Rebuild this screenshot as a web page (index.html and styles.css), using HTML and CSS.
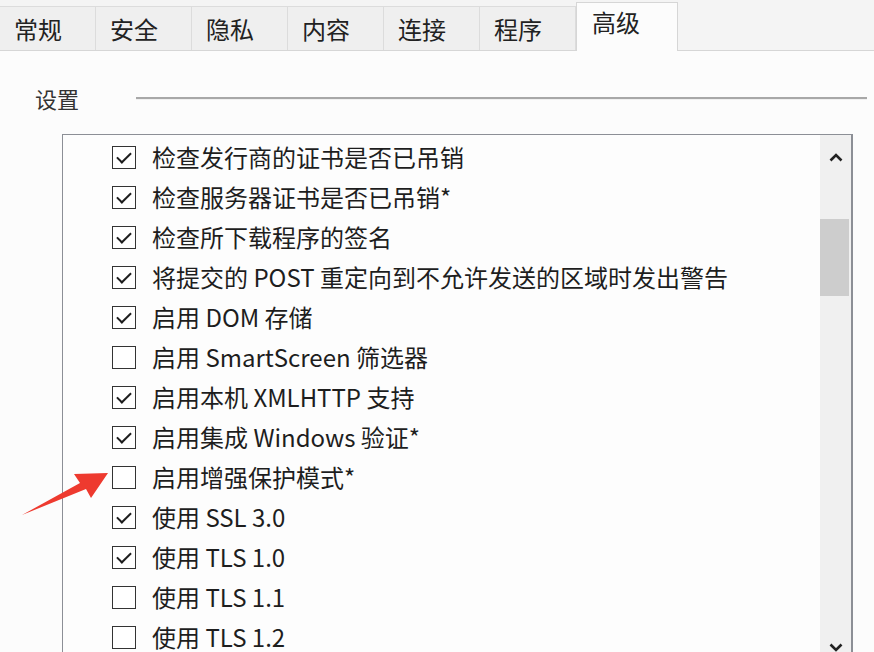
FILE: index.html
```html
<!DOCTYPE html>
<html lang="zh-CN">
<head>
  <meta charset="UTF-8">
  <meta name="viewport" content="width=device-width, initial-scale=1.0">
  <title>高级</title>
  <link rel="stylesheet" href="styles.css">
</head>
<body>
  <div class="dialog">
    <div class="tabs">
      <span class="tab">常规</span>
      <span class="tab">安全</span>
      <span class="tab">隐私</span>
      <span class="tab">内容</span>
      <span class="tab">连接</span>
      <span class="tab">程序</span>
      <span class="tab active">高级</span>
    </div>
    <div class="panel">
      <div class="group-title">
        <span class="group-label">设置</span>
        <span class="group-line"></span>
      </div>
      <div class="settings-box">
        <div class="settings-list">
          <div class="setting checked"><span class="checkbox"></span><span class="setting-text">检查发行商的证书是否已吊销</span></div>
          <div class="setting checked"><span class="checkbox"></span><span class="setting-text">检查服务器证书是否已吊销*</span></div>
          <div class="setting checked"><span class="checkbox"></span><span class="setting-text">检查所下载程序的签名</span></div>
          <div class="setting checked"><span class="checkbox"></span><span class="setting-text">将提交的 POST 重定向到不允许发送的区域时发出警告</span></div>
          <div class="setting checked"><span class="checkbox"></span><span class="setting-text">启用 DOM 存储</span></div>
          <div class="setting"><span class="checkbox"></span><span class="setting-text">启用 SmartScreen 筛选器</span></div>
          <div class="setting checked"><span class="checkbox"></span><span class="setting-text">启用本机 XMLHTTP 支持</span></div>
          <div class="setting checked"><span class="checkbox"></span><span class="setting-text">启用集成 Windows 验证*</span></div>
          <div class="setting"><span class="checkbox"></span><span class="setting-text">启用增强保护模式*</span></div>
          <div class="setting checked"><span class="checkbox"></span><span class="setting-text">使用 SSL 3.0</span></div>
          <div class="setting checked"><span class="checkbox"></span><span class="setting-text">使用 TLS 1.0</span></div>
          <div class="setting"><span class="checkbox"></span><span class="setting-text">使用 TLS 1.1</span></div>
          <div class="setting"><span class="checkbox"></span><span class="setting-text">使用 TLS 1.2</span></div>
        </div>
        <div class="scrollbar">
          <div class="scroll-btn">
            <svg width="14" height="10" viewBox="0 0 14 10"><path d="M1.5 8.5 L7 3 L12.5 8.5" fill="none" stroke="#222" stroke-width="2.6"/></svg>
          </div>
          <div class="scroll-track">
            <div class="scroll-thumb"></div>
          </div>
          <div class="scroll-btn down">
            <svg width="14" height="10" viewBox="0 0 14 10"><path d="M1.5 1.5 L7 7 L12.5 1.5" fill="none" stroke="#222" stroke-width="2.6"/></svg>
          </div>
        </div>
      </div>
    </div>
    <svg class="pointer" width="120" height="60" viewBox="0 0 120 60">
      <polygon points="22,55 80,23 74,14 108,13 91,38 86,29" fill="#ee3a2f"/>
    </svg>
  </div>
</body>
</html>
```

FILE: styles.css
```css
*{
  margin: 0;
  padding: 0;
  box-sizing: border-box;
}
body{
  width: 874px;
  height: 652px;
  overflow: hidden;
  background: #f7f7f7;
  font-family: "Noto Sans CJK SC", "Noto Sans", sans-serif;
  color: #222;
}
.dialog{
  position: relative;
  height: 652px;
}
.tabs{
  display: flex;
  align-items: flex-end;
  height: 51px;
  padding-top: 2px;
  border-bottom: 1px solid #d6d6d6;
  background: #f4f4f4;
}
.tab{
  width: 96px;
  height: 44px;
  padding: 6px 0 0 14px;
  font-size: 24px;
  line-height: 32px;
  background: #efefef;
  border: 1px solid #dcdcdc;
  border-bottom: none;
  border-left: none;
}
.tab.active{
  width: 102px;
  height: 49px;
  margin-bottom: -1px;
  padding: 3px 0 0 15px;
  background: #fcfcfc;
  border: 1px solid #d6d6d6;
  border-bottom: none;
}
.panel{
  height: 601px;
  background: #fcfcfc;
  padding-top: 33px;
}
.group-title{
  display: flex;
  align-items: center;
  padding-left: 35px;
  padding-right: 7px;
  height: 28px;
}
.group-label{
  font-size: 22px;
  line-height: 28px;
  color: #333;
}
.group-line{
  flex: 1;
  margin-left: 57px;
  height: 3px;
  border-top: 2px solid #a8a8a8;
  border-bottom: 1px solid #f0f0f0;
}
.settings-box{
  display: flex;
  width: 791px;
  height: 524px;
  margin: 22px 0 0 62px;
  border: 1px solid #8c8f96;
  border-right-width: 2px;
  background: #fdfdfd;
  overflow: hidden;
}
.settings-list{
  flex: 1;
  padding: 2px 0 0 49px;
}
.setting{
  display: flex;
  align-items: center;
  height: 40px;
}
.checkbox{
  position: relative;
  width: 24px;
  height: 23px;
  margin-right: 16px;
  border: 1.6px solid #333;
  background: #fff;
}
.setting.checked .checkbox:before{
  content: '';
  position: absolute;
  left: 4px;
  top: 1px;
  width: 12px;
  height: 6px;
  border-left: 2px solid #1e1e1e;
  border-bottom: 2px solid #1e1e1e;
  transform: translate(0, 4px) rotate(-45deg);
}
.setting-text{
  font-size: 24px;
  line-height: 26px;
  white-space: nowrap;
  color: #1e1e1e;
}
.scrollbar{
  display: flex;
  flex-direction: column;
  width: 31px;
  background: #f0f0f0;
}
.scroll-btn{
  display: flex;
  justify-content: center;
  align-items: center;
  height: 44px;
}
.scroll-btn.down{
  height: 30px;
  align-items: flex-end;
  padding-bottom: 4px;
}
.scroll-track{
  flex: 1;
  padding-top: 40px;
}
.scroll-thumb{
  width: 29px;
  height: 77px;
  background: #cdcdcd;
}
.pointer{
  position: absolute;
  left: 0;
  top: 460px;
}
```
